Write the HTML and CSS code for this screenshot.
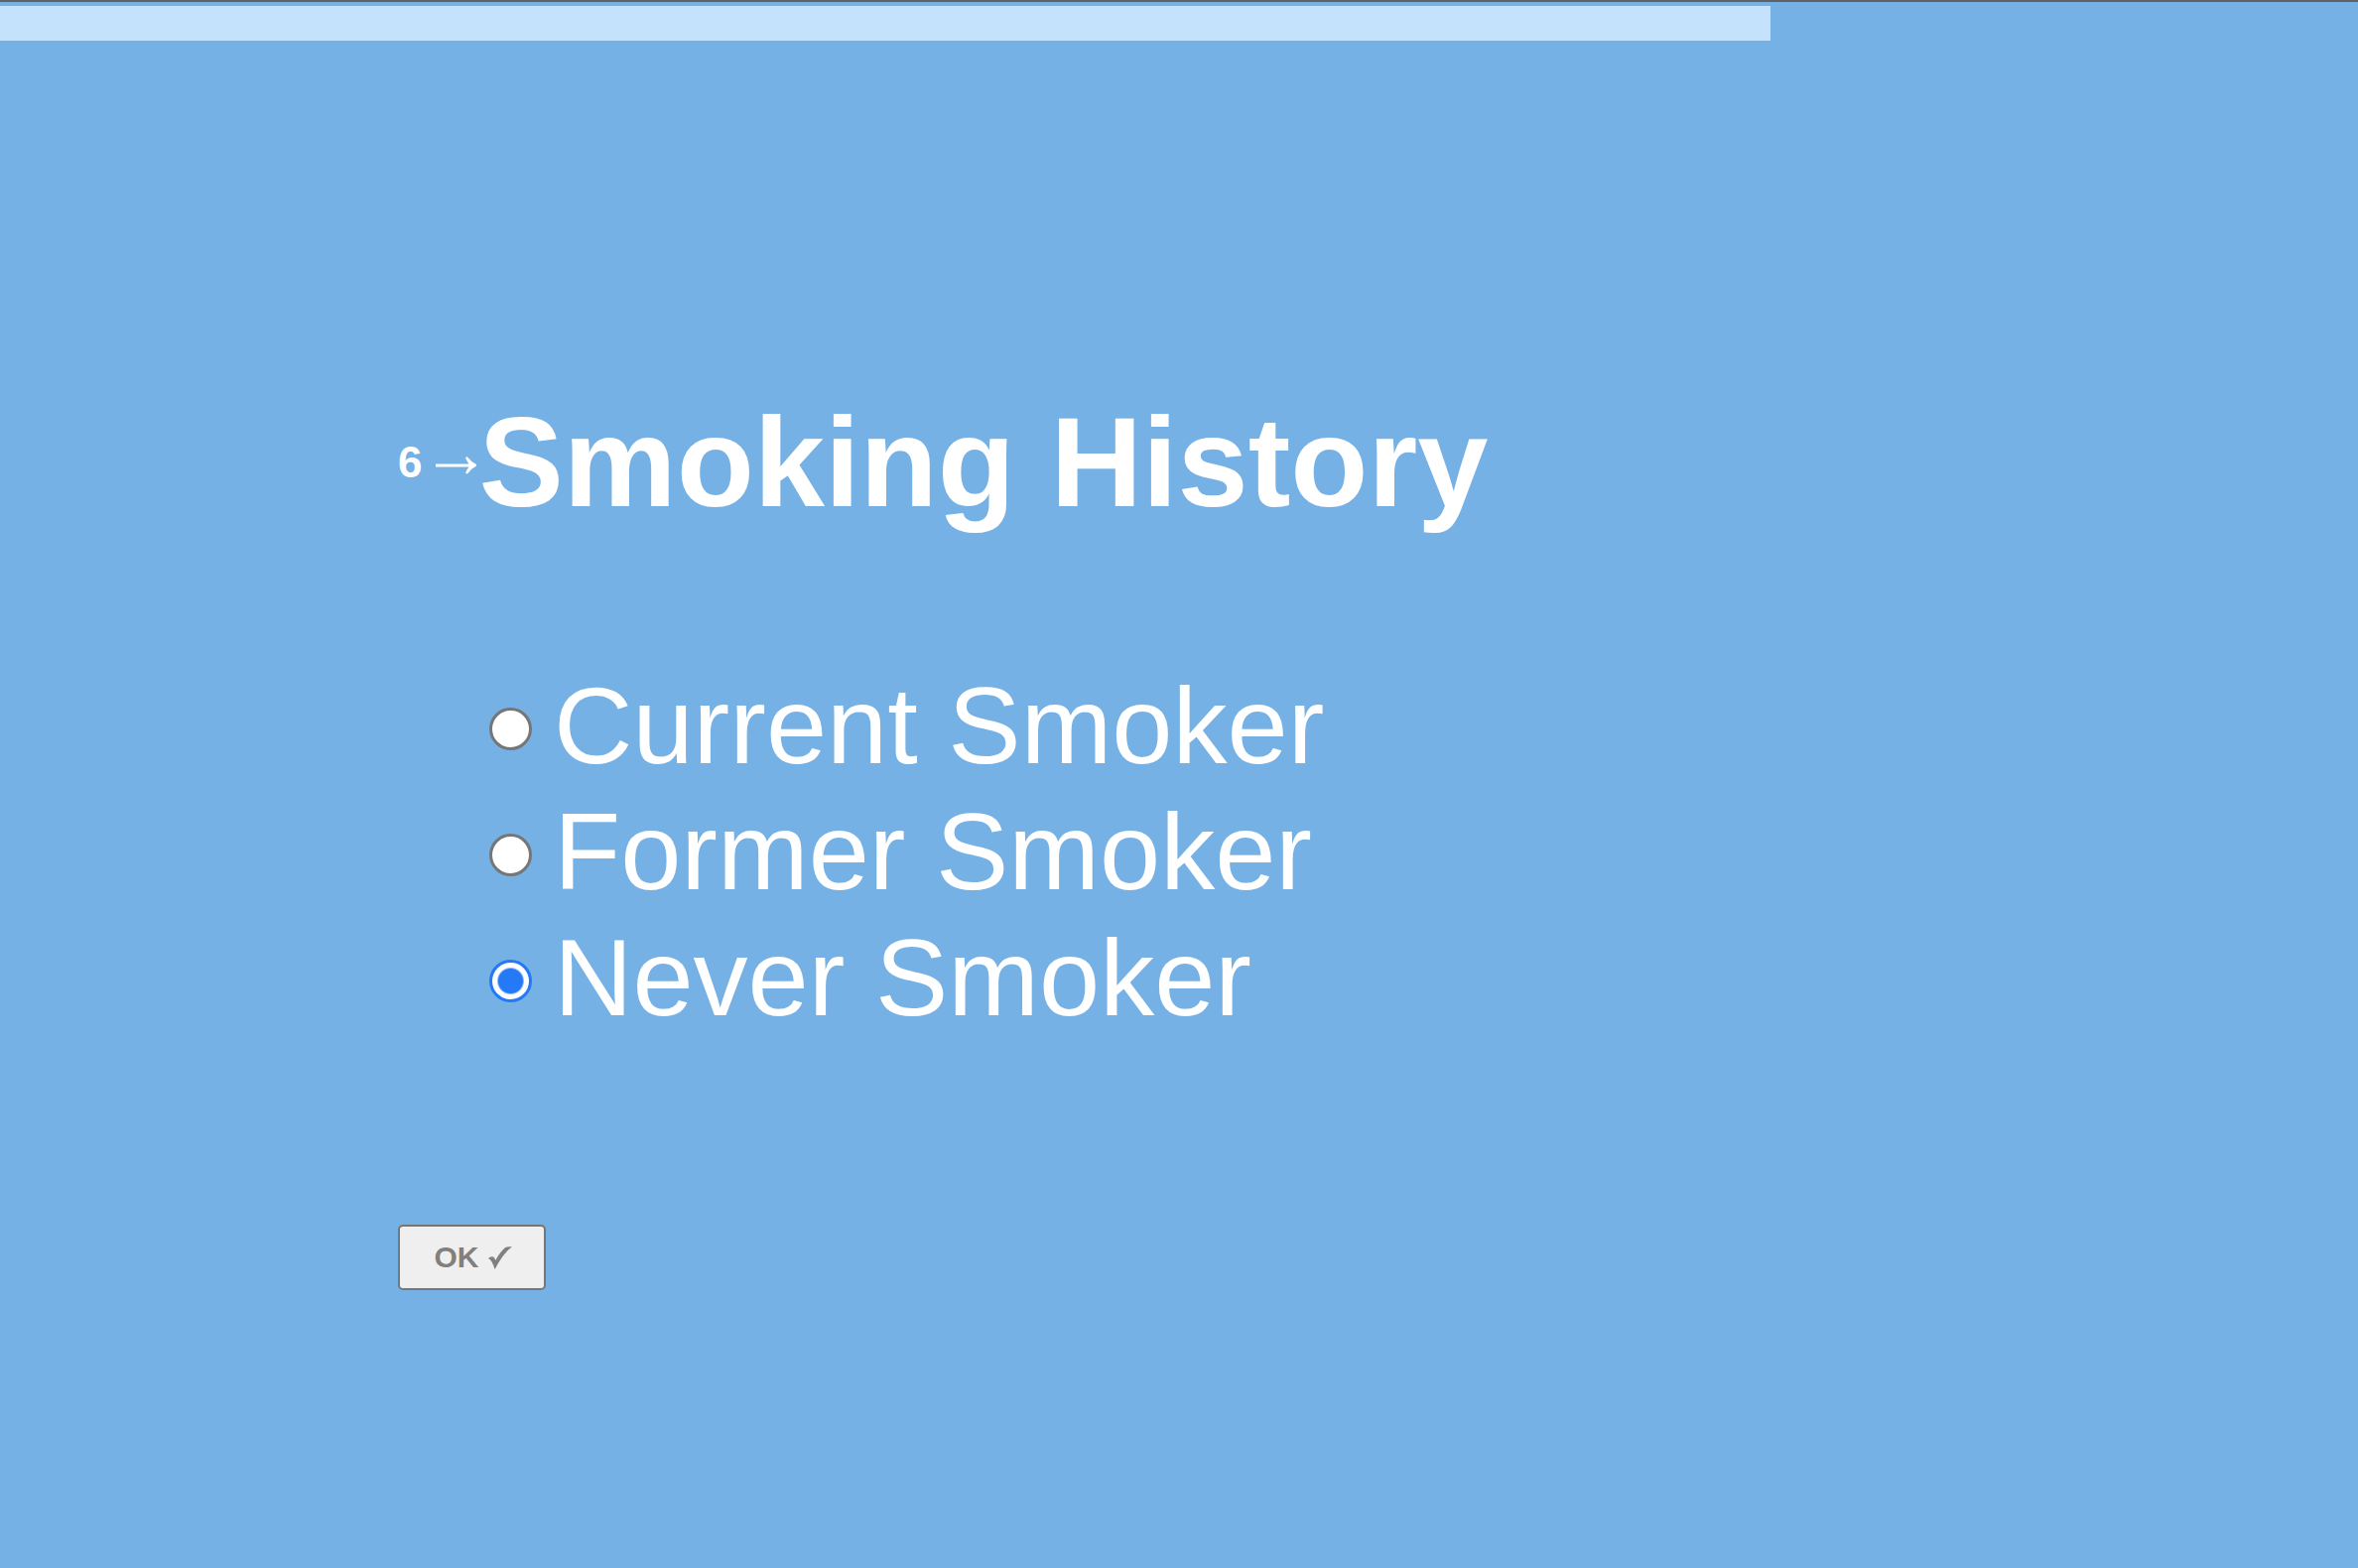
FILE: index.html
```html
<!DOCTYPE html>
<html lang="en">
<head>
  <meta charset="utf-8">
  <meta name="viewport" content="width=device-width, initial-scale=1">
  <title>Smoking History</title>
  <link rel="stylesheet" href="styles.css">
</head>
<body>
  <div class="progress" role="progressbar" aria-label="Survey progress" aria-valuemin="0" aria-valuemax="100" aria-valuenow="75">
    <div class="progress-fill" style="width: 75.1%"></div>
  </div>
  <form class="question">
    <header class="question-header">
      <span class="question-number">6</span>
      <svg class="arrow" viewBox="0 0 41 18" aria-hidden="true">
        <path d="M0 7.500H33.500Q31.500 4.500 30 1.500L31.500 0Q36 5.500 41 8V9.500Q36 12 32 17.500L30 16.500Q31.500 13 33.500 10.500H0Z"/>
      </svg>
      <h1 class="question-title" id="question-title">Smoking History</h1>
    </header>
    <div class="options" role="radiogroup" aria-labelledby="question-title">
      <label class="option"><input class="option-radio" type="radio" name="smoking" value="current"><span>Current Smoker</span></label>
      <label class="option"><input class="option-radio" type="radio" name="smoking" value="former"><span>Former Smoker</span></label>
      <label class="option"><input class="option-radio" type="radio" name="smoking" value="never" checked><span>Never Smoker</span></label>
    </div>
    <button class="ok-button" type="button">
      <span>OK</span>
      <svg class="check" viewBox="0 0 24 23" aria-hidden="true">
        <path d="M0 12Q2 10 4 10.200Q6.200 10.500 7.300 14Q12 5 17 1.200Q18.500 0 24 0.300Q15 7 7.500 21.500L6.500 23Q5.500 19 3.500 15.500Q2 12.500 0 12Z"/>
      </svg>
    </button>
  </form>
</body>
</html>
```
FILE: styles.css
```css
* {
  box-sizing: border-box;
}

body {
  margin: 0;
  min-height: 100vh;
  border-top: 2px solid #606162;
  background: #75b1e5;
  color: #fff;
  font-family: "Liberation Sans", Arial, sans-serif;
}

.progress {
  padding-top: 4px;
}

.progress-fill {
  height: 35px;
  background: #c5e2fd;
}

.question {
  padding: 353px 40px 40px 401px;
}

.question-header {
  display: flex;
  align-items: center;
}

.question-number {
  margin-right: 14px;
  font-size: 44px;
  font-weight: bold;
  line-height: 48px;
}

.arrow {
  flex: none;
  width: 41px;
  height: 18px;
  margin: 6px 2px 0 0;
  fill: currentColor;
}

.question-title {
  margin: 0;
  font-size: 128px;
  line-height: 144px;
}

.options {
  display: flex;
  flex-direction: column;
  align-items: flex-start;
  margin: 129px 0 186px 92px;
}

.option {
  display: flex;
  align-items: center;
  gap: 22px;
  font-size: 110px;
  line-height: 127px;
}

.option-radio {
  appearance: none;
  flex: none;
  width: 43px;
  height: 43px;
  margin: 8px 0 0;
  border: 3px solid #767676;
  border-radius: 50%;
  background: #fff;
}

.option-radio:checked {
  border-color: #2579f7;
  background: radial-gradient(circle, #2579f7 12px, #fff 14px);
}

.ok-button {
  display: flex;
  align-items: center;
  justify-content: center;
  gap: 9px;
  width: 149px;
  height: 66px;
  padding: 0 0 0 2px;
  border: 2px solid #767676;
  border-radius: 5px;
  background: #efefef;
  color: #808080;
  font-family: inherit;
  font-size: 30px;
  font-weight: bold;
  line-height: 32px;
}

.check {
  width: 24px;
  height: 23px;
  fill: currentColor;
}
```
